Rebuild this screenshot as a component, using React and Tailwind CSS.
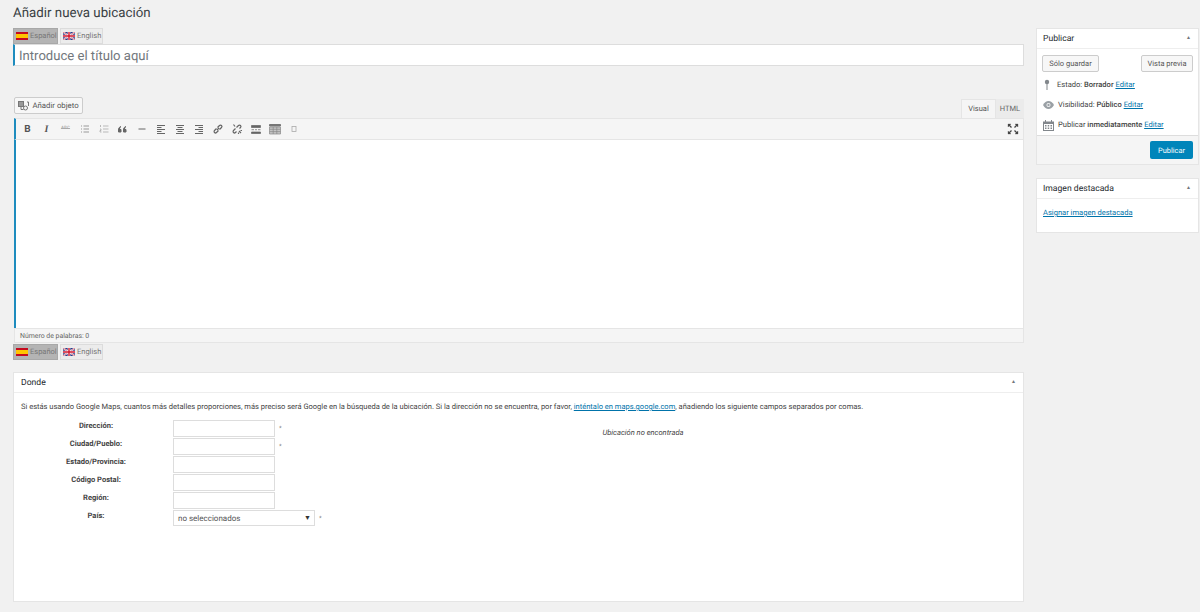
import React from 'react';

const FlagEs = () => (
  <svg width="12" height="8" viewBox="0 0 12 8" className="shrink-0">
    <rect width="12" height="8" fill="#c60b1e" />
    <rect y="2" width="12" height="4" fill="#ffc400" />
  </svg>
);

const FlagEn = () => (
  <svg width="12" height="8" viewBox="0 0 12 8" className="shrink-0">
    <rect width="12" height="8" fill="#2b3a86" />
    <path d="M0 0l12 8M12 0L0 8" stroke="#fff" strokeWidth="1.6" />
    <path d="M0 0l12 8M12 0L0 8" stroke="#cf142b" strokeWidth="0.6" />
    <path d="M6 0v8M0 4h12" stroke="#fff" strokeWidth="2.6" />
    <path d="M6 0v8M0 4h12" stroke="#cf142b" strokeWidth="1.4" />
  </svg>
);

const LangTabs = () => (
  <div className="flex h-4 gap-[2px]">
    <div className="flex w-[45px] items-center gap-[2px] border border-[#a8a8a8] bg-[#b4b4b4] pl-[2px] text-[7.500px] text-[#777]">
      <FlagEs />
      <span>Español</span>
    </div>
    <div className="flex w-[43px] items-center gap-[2px] border border-[#dcdcdc] bg-[#ececec] pl-[2px] text-[7.500px] text-[#777]">
      <FlagEn />
      <span>English</span>
    </div>
  </div>
);

const Ico = ({ children }) => (
  <svg width="12" height="12" viewBox="0 0 12 12" fill="none" stroke="#666" strokeWidth="1">
    {children}
  </svg>
);

const toolbar = [
  <span className="text-[10px] font-bold text-[#555]">B</span>,
  <span className="font-['Liberation_Serif',serif] text-[10px] font-bold italic text-[#555]">I</span>,
  <span className="text-[4.500px] font-medium text-[#aaa] line-through">ABC</span>,
  <Ico><path d="M2 3h1M2 6h1M2 9h1M4.500 3H10M4.500 6H10M4.500 9H10" stroke="#999" /></Ico>,
  <Ico><path d="M2.500 2v2M2 6h1v1.500H2V9h1.500M5 3h5.500M5 6h5.500M5 9h5.500" stroke="#aaa" strokeWidth="0.8" /></Ico>,
  <Ico><path d="M1.500 9V6.500C1.500 5 2.500 4 4 3.500M6.500 9V6.500C6.500 5 7.500 4 9 3.500M1.500 6.500h2.500V9H1.500zM6.500 6.500H9V9H6.500z" strokeWidth="1" fill="#666" /></Ico>,
  <Ico><path d="M2.500 6h7" strokeWidth="1" /></Ico>,
  <Ico><path d="M2 2.500h8M2 4.500h4.500M2 6.500h8M2 8.500h4.500M2 10.500h8" /></Ico>,
  <Ico><path d="M2 2.500h8M3.500 4.500h5M2 6.500h8M3.500 8.500h5M2 10.500h8" /></Ico>,
  <Ico><path d="M2 2.500h8M5.500 4.500H10M2 6.500h8M5.500 8.500H10M2 10.500h8" /></Ico>,
  <Ico><path d="M5 7l2-2M4.500 5.500l-2 2a1.400 1.400 0 0 0 2 2l2-2M5.500 4.500l2-2a1.400 1.400 0 0 1 2 2l-2 2" strokeWidth="1.200" /></Ico>,
  <Ico><path d="M4.500 5.500l-2 2a1.400 1.400 0 0 0 2 2l1-1M5.500 4.500l2-2a1.400 1.400 0 0 1 2 2l-1 1M8 8l2 2M7.500 9.500v1.500M9.500 7.500H11M2.500 1.500l1.500 2" strokeWidth="1.200" /></Ico>,
  <Ico><path d="M1.500 2.500h9v2h-9zM1.500 9h9v1.500h-9zM1.500 6.700h2.500M5 6.700h2M8 6.700h2.500" fill="#666" strokeWidth="0.7" /></Ico>,
  <Ico><path d="M0.500 1.500h11V3h-11z" fill="#777" stroke="#777" /><path d="M0.500 4h11v7h-11zM0.500 6.300h11M0.500 8.600h11M4.200 4v7M7.800 4v7" stroke="#888" fill="#c4c4c4" strokeWidth="0.7" /></Ico>,
  <Ico><rect x="4" y="3.500" width="4" height="5" stroke="#aaa" strokeWidth="0.8" /></Ico>,
];

const fields = ['Dirección:', 'Ciudad/Pueblo:', 'Estado/Provincia:', 'Código Postal:', 'Región:'];

const Panel = ({ title, className, titleClass, children }) => (
  <div className={`border border-[#e5e5e5] bg-white ${className}`}>
    <div className="flex h-5 items-center justify-between border-b border-[#eee] pt-px text-[8.600px] text-[#23282d]">
      <span className={titleClass}>{title}</span>
      <span className="pr-[7px] text-[5px] text-[#72777c]">▲</span>
    </div>
    {children}
  </div>
);

const A = ({ children }) => <span className="text-[#0073aa] underline">{children}</span>;

export default function App() {
  return (
    <div className="flex h-[612px] w-[1200px] gap-3 overflow-hidden bg-[#f1f1f1] pl-[13px] font-['Roboto',sans-serif] text-[7.550px] text-[#444] [text-rendering:geometricPrecision]">
      <div className="flex w-[1011px] flex-col">
        <h1 className="flex h-7 items-center pb-px text-[13.300px] leading-none text-[#3a3f44]">Añadir nueva ubicación</h1>
        <LangTabs />
        <div className="flex h-[22px] items-center border border-l-2 border-[#ddd] border-l-[#1e8cbe] bg-white pl-1 pt-[3px] text-[13.100px] text-[#72777c]">
          Introduce el título aquí
        </div>

        <div className="mt-[31px] flex h-[21px] items-start justify-between pl-px">
          <div className="flex h-[17px] w-[69px] items-center justify-center gap-[3px] rounded-[2px] border border-[#ccc] bg-[#f7f7f7] pt-px text-[7.800px] text-[#555]">
            <svg width="11" height="10" viewBox="0 0 11 10" fill="none" stroke="#777" strokeWidth="1">
              <rect x="0.500" y="0.500" width="5" height="5" fill="#999" />
              <circle cx="7.500" cy="7" r="2" />
              <path d="M3 6v2.500h2.500M9 1h1.500v4" />
            </svg>
            <span>Añadir objeto</span>
          </div>
          <div className="mt-[2px] flex h-[19px] text-[7.500px] text-[#555]">
            <div className="flex w-[35px] items-center justify-center border border-b-0 border-[#e5e5e5] bg-[#f5f5f5]">Visual</div>
            <div className="flex w-[28px] items-center justify-center bg-[#ebebeb] text-[#666]">HTML</div>
          </div>
        </div>

        <div className="ml-px flex h-[22px] items-center justify-between border-y border-r border-l-2 border-[#e5e5e5] border-l-[#1e8cbe] bg-[#f5f5f5] pl-[2px] pr-[3px]">
          <div className="flex">
            {toolbar.map((icon, i) => (
              <div key={i} className="flex h-4 w-[19px] items-center justify-center">{icon}</div>
            ))}
          </div>
          <svg width="12" height="12" viewBox="0 0 12 12" fill="none" stroke="#444" strokeWidth="1.300" className="mr-[1px]">
            <path d="M4.500 4.500L1.500 1.500M7.500 4.500l3-3M4.500 7.500l-3 3M7.500 7.500l3 3" />
            <path d="M1 1h3L1 4zM11 1H8l3 3zM1 11h3l-3-3zM11 11H8l3-3z" fill="#444" strokeWidth="0.300" />
          </svg>
        </div>
        <div className="ml-px h-[188px] border-r border-l-2 border-[#e5e5e5] border-l-[#1e8cbe] bg-white" />
        <div className="ml-px flex h-[15px] items-center border border-[#e5e5e5] bg-[#f5f5f5] pl-[5px] pt-px text-[6.900px] text-[#666]">
          Número de palabras: 0
        </div>
        <div className="mt-px">
          <LangTabs />
        </div>

        <Panel title="Donde" titleClass="pl-[7px]" className="mt-3 h-[230px]">
          <p className="mt-[9px] pl-[7px] text-[7.520px] leading-[10px]">
            Si estás usando Google Maps, cuantos más detalles proporciones, más preciso será Google en la búsqueda de la ubicación. Si la dirección no se encuentra, por favor, <A>inténtalo en maps.google.com</A>, añadiendo los siguiente campos separados por comas.
          </p>
          <div className="mt-[8px] flex">
            <div className="w-[159px] shrink-0 pl-[7px]">
              {fields.map((f) => (
                <div key={f} className="h-[18px] w-[150px] pt-px text-center font-bold leading-[9px] text-[#444]">{f}</div>
              ))}
              <div className="h-[18px] w-[150px] pt-px text-center font-bold leading-[9px] text-[#444]">País:</div>
            </div>
            <div className="w-[300px] shrink-0">
              {fields.map((f, i) => (
                <div key={f} className="flex h-[18px] items-start gap-1">
                  <div className="h-[17px] w-[102px] border border-[#ddd] bg-white" />
                  {i < 2 && <span className="mt-1 text-[6px] text-[#888]">*</span>}
                </div>
              ))}
              <div className="flex items-start gap-1">
                <div className="flex h-4 w-[142px] items-center justify-between border border-[#ddd] bg-white pl-1 pr-[3px] pt-px text-[8px] text-[#555]">
                  <span>no seleccionados</span>
                  <span className="text-[7px] text-[#333]">▼</span>
                </div>
                <span className="mt-1 text-[6px] text-[#888]">*</span>
              </div>
            </div>
            <div className="w-[340px] pt-[8px] text-center italic leading-[9px]">Ubicación no encontrada</div>
          </div>
        </Panel>
      </div>

      <div className="flex w-[163px] flex-col gap-[13px] pt-[28px]">
        <Panel title="Publicar" titleClass="pl-[6px]" className="h-[137px]">
          <div className="flex justify-between pl-[5px] pr-[5px] pt-[6px]">
            <div className="flex h-[17px] w-[57px] items-center justify-center rounded-[2px] border border-[#ccc] bg-[#f7f7f7] pt-px text-[7.500px] text-[#555]">Sólo guardar</div>
            <div className="flex h-[17px] w-[52px] items-center justify-center rounded-[2px] border border-[#ccc] bg-[#f7f7f7] pt-px text-[7.500px] text-[#555]">Vista previa</div>
          </div>
          <div className="mt-[3px] flex h-5 items-center gap-[7px] pl-[7px]">
            <svg width="6" height="11" viewBox="0 0 6 11" fill="#82878c" className="mb-[2px]">
              <circle cx="3" cy="3" r="2.200" />
              <rect x="2.500" y="4" width="1" height="7" />
            </svg>
            <span>Estado: <b className="font-medium">Borrador</b> <A>Editar</A></span>
          </div>
          <div className="flex h-5 items-center gap-[4px] pl-[6px]">
            <svg width="11" height="8" viewBox="0 0 11 8" fill="#9aa0a5">
              <path d="M0 4c1.500-2.700 3.400-4 5.500-4S9.500 1.300 11 4c-1.500 2.700-3.400 4-5.500 4S1.500 6.700 0 4z" />
              <circle cx="5.500" cy="4" r="2" fill="#fff" />
              <circle cx="5.500" cy="4" r="1.200" />
            </svg>
            <span>Visibilidad: <b className="font-medium">Público</b> <A>Editar</A></span>
          </div>
          <div className="flex h-5 items-center gap-[4px] pl-[6px]">
            <svg width="11" height="11" viewBox="0 0 11 11" fill="#82878c">
              <path d="M0 1.500h11V11H0z" />
              <path d="M2 0h1v2.500H2zM8 0h1v2.500H8z" />
              <path d="M1 4h9v6H1z" fill="#fff" />
              <path d="M2 5h1.500v1.500H2zM4.700 5h1.500v1.500H4.700zM7.500 5H9v1.500H7.500zM2 7.500h1.500V9H2zM4.700 7.500h1.500V9H4.700zM7.500 7.500H9V9H7.500z" />
            </svg>
            <span>Publicar <b className="font-medium">inmediatamente</b> <A>Editar</A></span>
          </div>
          <div className="flex h-[29px] items-center justify-end border-t border-[#ddd] bg-[#f5f5f5] pr-[5px]">
            <div className="flex h-[18px] w-[43px] items-center justify-center rounded-[2px] bg-[#0085ba] pt-px text-[7.400px] text-white">Publicar</div>
          </div>
        </Panel>
        <Panel title="Imagen destacada" titleClass="pl-[6px]" className="h-[55px]">
          <div className="pl-[6px] pt-[9px] leading-[10px]">
            <A>Asignar imagen destacada</A>
          </div>
        </Panel>
      </div>
    </div>
  );
}
